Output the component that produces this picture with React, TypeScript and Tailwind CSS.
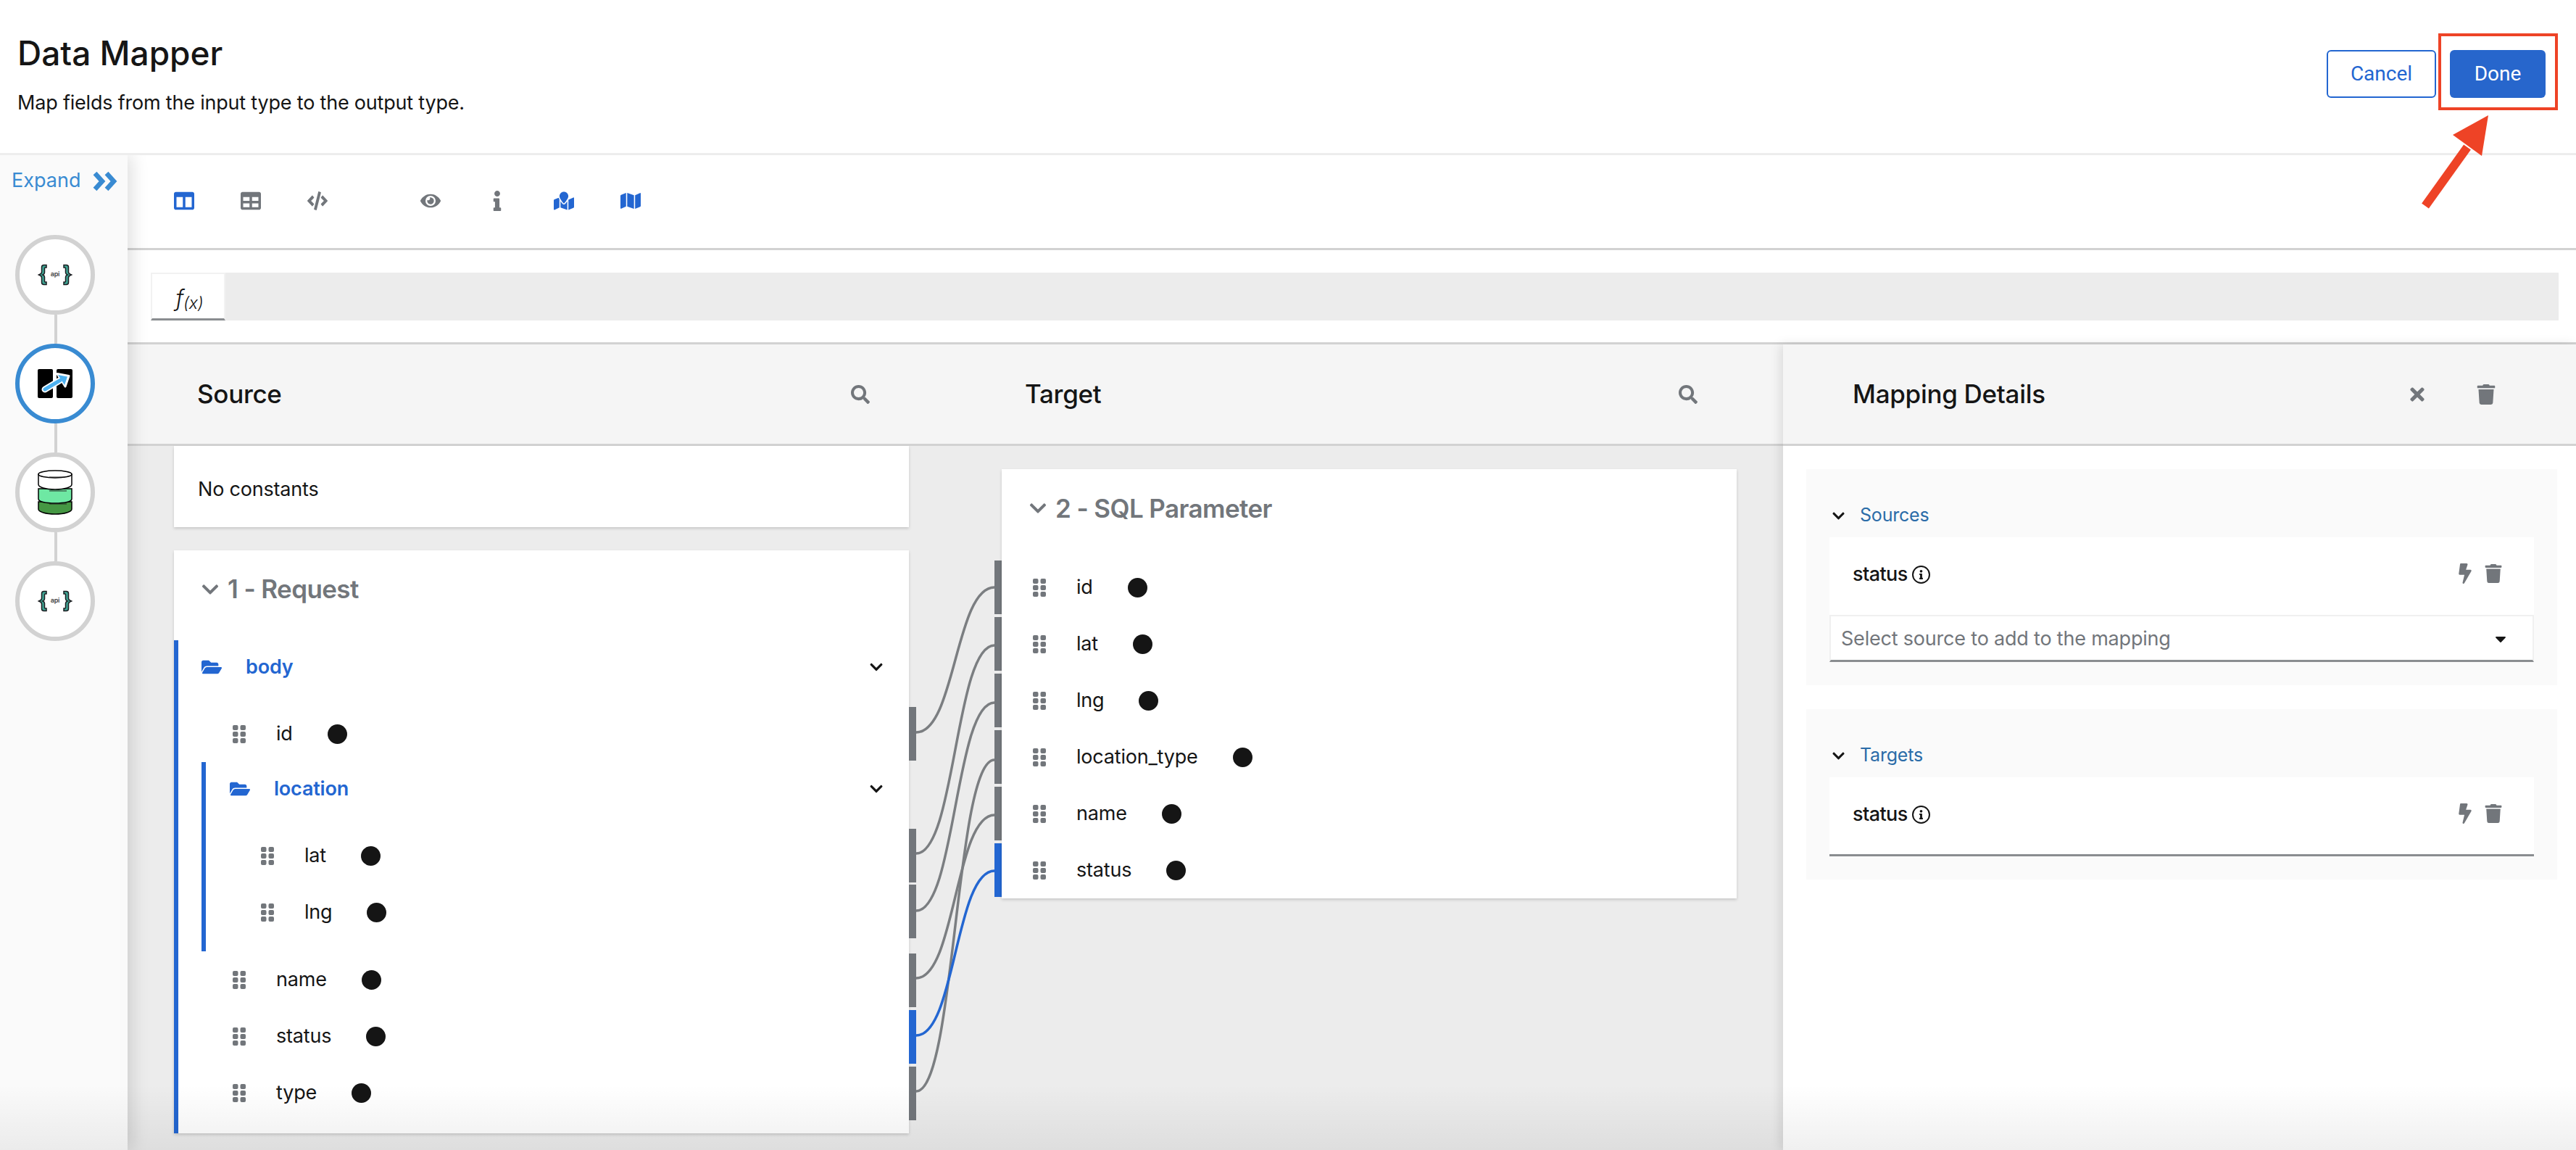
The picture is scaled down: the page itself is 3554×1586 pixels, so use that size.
import {
  FaBolt,
  FaCaretDown,
  FaChevronDown,
  FaCode,
  FaColumns,
  FaEye,
  FaFolderOpen,
  FaInfo,
  FaMap,
  FaMapMarked,
  FaSearch,
  FaTable,
  FaTimes,
  FaTrash,
} from "react-icons/fa";

const sourceBars = [974, 1142, 1219, 1314, 1392, 1470];
const targetBars = [772, 850, 928, 1006, 1084, 1162];
const links = [
  { from: 1009, to: 809 },
  { from: 1176, to: 889 },
  { from: 1255, to: 968 },
  { from: 1348, to: 1123 },
  { from: 1504, to: 1047 },
  { from: 1427, to: 1200, active: true },
];
const targetFields = ["id", "lat", "lng", "location_type", "name", "status"];

function Grip() {
  return (
    <svg width="18" height="25" viewBox="0 0 18 25" className="shrink-0 fill-[#72767b]">
      <rect x="0" y="0" width="7.5" height="7" rx="2" />
      <rect x="10.5" y="0" width="7.5" height="7" rx="2" />
      <rect x="0" y="9" width="7.5" height="7" rx="2" />
      <rect x="10.5" y="9" width="7.5" height="7" rx="2" />
      <rect x="0" y="18" width="7.5" height="7" rx="2" />
      <rect x="10.5" y="18" width="7.5" height="7" rx="2" />
    </svg>
  );
}

function Field({ name, indent }: { name: string; indent: string }) {
  return (
    <div className={`flex h-[78px] items-center ${indent}`}>
      <Grip />
      <span className="ml-[42px] mr-[48px]">{name}</span>
      <span className="h-[27px] w-[27px] rounded-full bg-[#151515]" />
    </div>
  );
}

function FolderRow({ name, className }: { name: string; className: string }) {
  return (
    <div className={`flex items-center pr-[35px] ${className}`}>
      <FaFolderOpen size={28} className="shrink-0 text-[#2366d1]" />
      <span className="ml-[33px] grow font-semibold text-[#2366d1]">{name}</span>
      <FaChevronDown size={20} className="text-[#151515]" />
    </div>
  );
}

function ApiIcon() {
  return (
    <svg width="48" height="30" viewBox="0 0 48 30">
      <path
        d="M12 1.5H8.5C6.5 1.5 5.5 2.5 5.5 4.5V11C5.5 12.8 4 14 1.5 15C4 16 5.5 17.2 5.5 19V25.5C5.5 27.5 6.5 28.5 8.5 28.5H12V25H10.5C9.8 25 9.5 24.6 9.5 24V18C9.5 16.5 8.5 15.6 7 15C8.5 14.4 9.5 13.5 9.5 12V6C9.5 5.4 9.8 5 10.5 5H12Z"
        fill="#3fa392"
        stroke="#1b1d21"
        strokeWidth="1.5"
      />
      <path
        d="M36 1.5H39.5C41.5 1.5 42.5 2.5 42.5 4.5V11C42.5 12.8 44 14 46.5 15C44 16 42.5 17.2 42.5 19V25.5C42.5 27.5 41.5 28.5 39.5 28.5H36V25H37.5C38.2 25 38.5 24.6 38.5 24V18C38.5 16.5 39.5 15.6 41 15C39.5 14.4 38.5 13.5 38.5 12V6C38.5 5.4 38.2 5 37.5 5H36Z"
        fill="#3fa392"
        stroke="#1b1d21"
        strokeWidth="1.5"
      />
      <text x="24" y="17" textAnchor="middle" fontSize="9" fontWeight="600" fontFamily="Inter, sans-serif" fill="#444">
        api
      </text>
    </svg>
  );
}

function MapperIcon() {
  return (
    <svg width="48" height="40" viewBox="0 0 48 40">
      <rect x="0" y="0" width="21" height="40" rx="2" fill="#000" />
      <rect x="26" y="0" width="22" height="40" rx="2" fill="#000" />
      <path d="M10 28L30 16" stroke="#fff" strokeWidth="9" strokeLinecap="round" />
      <path d="M27 6.5L43 9.5L38 24Z" fill="#fff" stroke="#fff" strokeWidth="3" strokeLinejoin="round" />
      <path d="M10 28L31 15.5" stroke="#4db1f0" strokeWidth="5" strokeLinecap="round" />
      <path d="M28 8L41 10.5L37 22Z" fill="#4db1f0" />
    </svg>
  );
}

function DatabaseIcon() {
  return (
    <svg width="48" height="62" viewBox="0 0 48 62">
      <path d="M1 44V54C1 58 11 61 24 61C37 61 47 58 47 54V44Z" fill="#459743" stroke="#000" strokeWidth="1.5" />
      <path d="M1 26V40C1 44 11 46 24 46C37 46 47 44 47 40V26Z" fill="#6ee8a3" stroke="#000" strokeWidth="1.5" />
      <path d="M1 6V20C1 24 11 27 24 27C37 27 47 24 47 20V6Z" fill="#fff" stroke="#000" strokeWidth="1.5" />
      <ellipse cx="24" cy="6" rx="23" ry="5" fill="#fff" stroke="#000" strokeWidth="1.5" />
      <path d="M16 10H38M16 29H40M16 47H40" stroke="#222" strokeWidth="1.2" fill="none" />
    </svg>
  );
}

function Node({ active, children }: { active?: boolean; children: React.ReactNode }) {
  return (
    <div
      className={`flex h-[110px] w-[110px] items-center justify-center rounded-full border-[6px] bg-white ${
        active ? "border-[#398bd2]" : "border-[#d2d2d2]"
      }`}
    >
      {children}
    </div>
  );
}

function Connector() {
  return <div className="ml-[2px] h-[40px] w-[4px] bg-[#d2d2d2]" />;
}

function StatusCard({ border }: { border?: boolean }) {
  return (
    <div
      className={`flex bg-white pl-[32px] pr-[43px] pt-[36px] ${
        border ? "h-[109px] border-b-[3px] border-[#8a8d90]" : "h-[107px]"
      }`}
    >
      <span className="flex h-[30px] grow items-center font-medium tracking-[-0.6px]">
        status
        <span className="ml-[6px] flex h-[25px] w-[25px] items-center justify-center rounded-full border-2 border-[#151515] text-[#151515]">
          <FaInfo size={13} />
        </span>
      </span>
      <FaBolt size={28} className="text-[#72767b]" />
      <FaTrash size={26} className="ml-[12px] mt-[1px] text-[#72767b]" />
    </div>
  );
}

export default function App() {
  return (
    <div className="relative flex h-[1586px] w-[3554px] flex-col overflow-hidden bg-white font-['Inter',sans-serif] text-[27px] tracking-[-0.2px] text-[#151515]">
      <header className="relative z-20 flex h-[214px] shrink-0 justify-between border-b-[3px] border-[#ededed] bg-white pl-[24px] pr-[42px]">
        <div>
          <h1 className="mt-[43px] text-[46px] font-medium leading-[60px] tracking-normal">Data Mapper</h1>
          <p className="mt-[23px] leading-[32px]">Map fields from the input type to the output type.</p>
        </div>
        <div className="flex gap-[19px] pt-[69px] font-['Roboto',sans-serif] text-[28px] tracking-normal">
          <button className="h-[66px] w-[151px] rounded-[6px] border-2 border-[#2366d1] text-[#2366d1]">Cancel</button>
          <button className="h-[66px] w-[132px] rounded-[6px] bg-[#2766cc] text-white">Done</button>
        </div>
      </header>

      <div className="flex min-h-0 grow">
        <aside className="relative z-10 flex w-[176px] shrink-0 flex-col bg-[#fafafa] shadow-[6px_0_22px_rgba(0,0,0,0.13)]">
          <div className="flex h-[70px] items-center pl-[16px] pt-[1px] text-[#398bd2]">
            <span className="text-[27px] tracking-normal">Expand</span>
            <svg width="34" height="28" viewBox="0 0 34 28" className="ml-[17px]" fill="none" stroke="#398bd2" strokeWidth="6.5">
              <path d="M3 3L13 14L3 25" />
              <path d="M19 3L29 14L19 25" />
            </svg>
          </div>
          <div className="ml-[21px] mt-[40px] flex w-[110px] flex-col items-center">
            <Node>
              <ApiIcon />
            </Node>
            <Connector />
            <Node active>
              <MapperIcon />
            </Node>
            <Connector />
            <Node>
              <DatabaseIcon />
            </Node>
            <Connector />
            <Node>
              <ApiIcon />
            </Node>
          </div>
        </aside>

        <main className="flex min-w-0 grow flex-col">
          <div className="flex h-[131px] shrink-0 items-center gap-[64px] border-b-[3px] border-[#d2d2d2] pb-[3px] pl-[64px]">
            <FaColumns size={28} className="text-[#2366d1]" />
            <FaTable size={28} className="text-[#72767b]" />
            <FaCode preserveAspectRatio="none" className="h-[26px] w-[28px] text-[#72767b]" />
            <span className="w-0" />
            <FaEye size={28} className="text-[#72767b]" />
            <FaInfo size={28} className="text-[#72767b]" />
            <FaMapMarked size={28} className="text-[#2366d1]" />
            <FaMap size={28} className="text-[#2366d1]" />
          </div>

          <div className="h-[130px] shrink-0 border-b-[3px] border-[#d2d2d2] pl-[32px] pr-[24px] pt-[31px]">
            <div className="h-[66px] bg-[#ececec]">
              <div className="flex h-[66px] w-[103px] items-center justify-center border-2 border-b-[3px] border-[#f2f2f2] border-b-[#8a8d90] bg-white pl-[4px] pt-[6px] italic">
                <span className="text-[31px] font-light">f</span>
                <span className="mt-[14px] text-[23px] font-light">(x)</span>
              </div>
            </div>
          </div>

          <div className="flex min-h-0 grow">
            <section className="flex min-w-0 grow flex-col">
              <div className="grid h-[140px] shrink-0 grid-cols-[1014px_1014px] gap-x-[128px] border-b-[3px] border-[#d2d2d2] bg-[#f5f5f5] px-[64px] text-[35px] tracking-[-0.3px]">
                <div className="flex items-center justify-between pl-[32px] pr-[54px]">
                  <span className="font-medium">Source</span>
                  <FaSearch size={26} className="text-[#72767b]" />
                </div>
                <div className="flex items-center justify-between pl-[32px] pr-[54px]">
                  <span className="font-medium">Target</span>
                  <FaSearch size={26} className="text-[#72767b]" />
                </div>
              </div>

              <div className="flex min-h-0 grow bg-[#ececec] px-[64px]">
                <div className="w-[1014px] shrink-0">
                  <div className="flex h-[112px] items-center bg-white pl-[33px] pt-[9px] shadow-[0_2px_4px_rgba(0,0,0,0.16)]">No constants</div>
                  <div className="mt-[32px] h-[804px] bg-white shadow-[0_2px_4px_rgba(0,0,0,0.16)]">
                    <div className="flex h-[110px] items-center pb-[3px] pl-[37px] text-[#72767b]">
                      <FaChevronDown size={26} />
                      <span className="ml-[11px] text-[35px] font-semibold tracking-[-0.6px]">1 - Request</span>
                    </div>
                    <div className="mt-[14px] h-[680px] border-l-[6px] border-[#2366d1]">
                      <FolderRow name="body" className="h-[74px] pl-[32px]" />
                      <div className="mt-[16px]">
                        <Field name="id" indent="pl-[75px]" />
                      </div>
                      <div className="ml-[32px] h-[261px] border-l-[6px] border-[#2366d1]">
                        <FolderRow name="location" className="h-[74px] pl-[33px]" />
                        <div className="mt-[16px]">
                          <Field name="lat" indent="pl-[76px]" />
                          <Field name="lng" indent="pl-[76px]" />
                        </div>
                      </div>
                      <Field name="name" indent="pl-[75px]" />
                      <Field name="status" indent="pl-[75px]" />
                      <Field name="type" indent="pl-[75px]" />
                    </div>
                  </div>
                </div>

                <svg width="128" height="972" viewBox="0 614 128 972" className="shrink-0" fill="none">
                  {sourceBars.map((y, i) => (
                    <rect key={y} x="0" y={y} width="10" height="74" fill={i === 4 ? "#2366d1" : "#72767b"} />
                  ))}
                  {targetBars.map((y, i) => (
                    <rect key={y} x="118" y={y} width="10" height="74" fill={i === 5 ? "#2366d1" : "#72767b"} />
                  ))}
                  {links.map((link) => (
                    <path
                      key={link.from}
                      d={`M10 ${link.from}C64 ${link.from} 64 ${link.to} 118 ${link.to}`}
                      stroke={link.active ? "#2366d1" : "#7b7e81"}
                      strokeWidth="3.5"
                    />
                  ))}
                </svg>

                <div className="mt-[32px] h-[592px] w-[1014px] shrink-0 self-start bg-white shadow-[0_2px_4px_rgba(0,0,0,0.16)]">
                  <div className="flex h-[108px] items-center pl-[37px] text-[#72767b]">
                    <FaChevronDown size={26} />
                    <span className="ml-[11px] text-[35px] font-semibold tracking-[-0.6px]">2 - SQL Parameter</span>
                  </div>
                  <div className="mt-[16px]">
                    {targetFields.map((name) => (
                      <Field key={name} name={name} indent="pl-[43px]" />
                    ))}
                  </div>
                </div>
              </div>
            </section>

            <section className="relative z-10 flex w-[1094px] shrink-0 flex-col bg-white shadow-[-4px_0_14px_rgba(0,0,0,0.1)]">
              <div className="flex h-[140px] shrink-0 items-center border-b-[3px] border-[#d2d2d2] bg-[#f5f5f5] pl-[96px] pr-[110px]">
                <span className="grow text-[35px] font-medium tracking-[-0.3px]">Mapping Details</span>
                <FaTimes size={28} className="text-[#72767b]" />
                <FaTrash size={28} className="ml-[67px] text-[#72767b]" />
              </div>
              <div className="flex flex-col gap-[33px] pl-[32px] pr-[26px] pt-[32px]">
                <div className="h-[298px] bg-[#fafafa] px-[32px]">
                  <div className="flex h-[94px] items-center pt-[34px] text-[25px] text-[#2b6ca8]">
                    <FaChevronDown size={19} className="ml-[3px] text-[#151515]" />
                    <span className="ml-[20px]">Sources</span>
                  </div>
                  <StatusCard />
                  <div className="flex h-[65px] items-center justify-between border-2 border-b-[3px] border-[#f0f0f0] border-b-[#8a8d90] bg-white pl-[14px] pr-[32px] pt-[2px] text-[27px] text-[#72767b]">
                    <span>Select source to add to the mapping</span>
                    <FaCaretDown size={24} className="text-[#151515]" />
                  </div>
                </div>
                <div className="h-[235px] bg-[#fafafa] px-[32px]">
                  <div className="flex h-[94px] items-center pt-[34px] text-[25px] text-[#2b6ca8]">
                    <FaChevronDown size={19} className="ml-[3px] text-[#151515]" />
                    <span className="ml-[20px]">Targets</span>
                  </div>
                  <StatusCard border />
                </div>
              </div>
            </section>
          </div>
        </main>
      </div>

      {/* bottom edge shade */}
      <div className="pointer-events-none absolute bottom-0 left-0 right-0 z-20 h-[90px] bg-gradient-to-b from-transparent to-black/[0.06]" />

      {/* annotation */}
      <div className="pointer-events-none absolute left-[3364px] top-[46px] z-30 h-[106px] w-[165px] border-4 border-[#ee4326]" />
      <svg width="100" height="140" viewBox="3340 155 100 140" className="pointer-events-none absolute left-[3340px] top-[155px] z-30">
        <path d="M3346 284L3404 203" stroke="#ee4326" strokeWidth="12" />
        <path d="M3433 159L3384 186L3424 215Z" fill="#ee4326" />
      </svg>
    </div>
  );
}
